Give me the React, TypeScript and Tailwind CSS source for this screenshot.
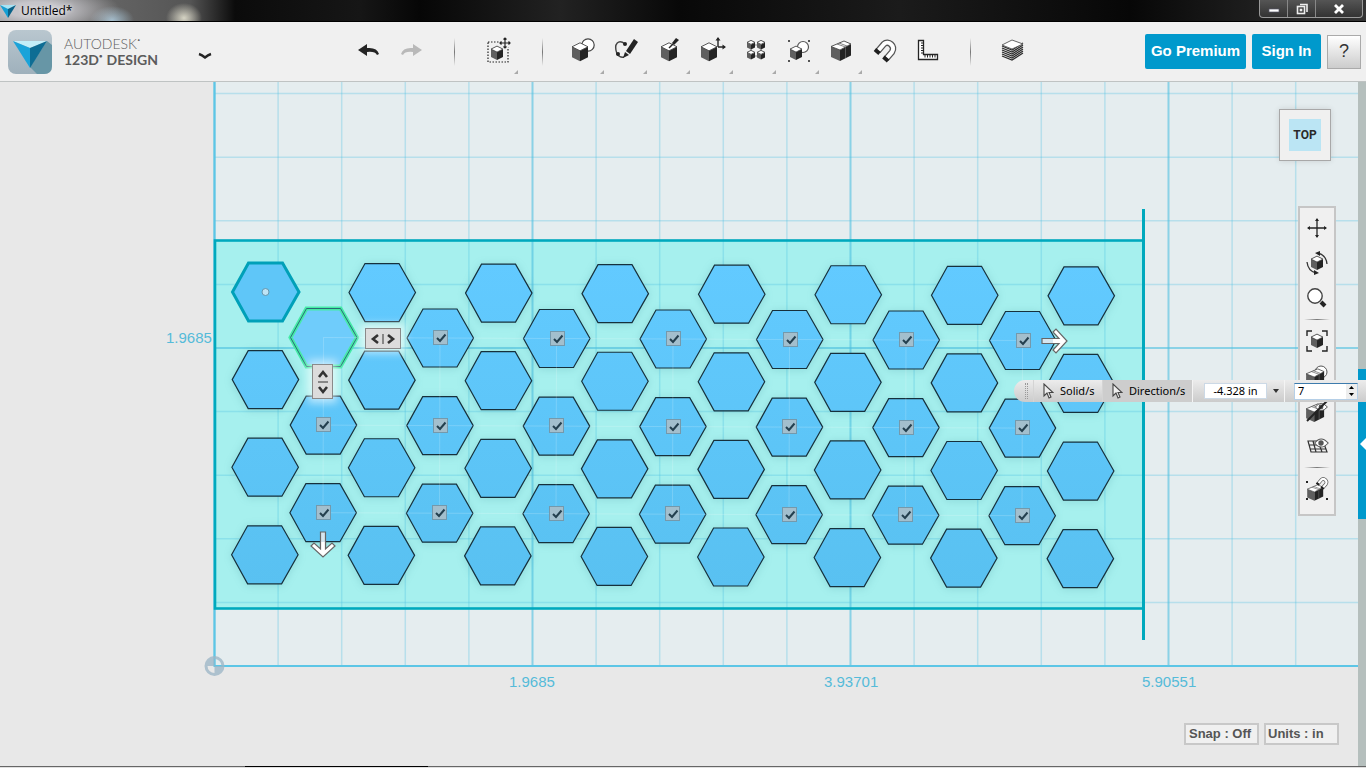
import { useState } from "react"
import type { ReactNode } from "react"

const COL_GAP = 116.5
const ROW_GAP = 87.6

function Cube({ x = 0, y = 0, w = 8 }: { x?: number; y?: number; w?: number }) {
  const h = w * 0.5
  const t = w * 1.15
  return (
    <g transform={`translate(${x} ${y})`} strokeLinejoin="round">
      <path d={`M${-w} ${h - t} L0 ${2 * h - t} V${t} L${-w} ${t - h}Z`} fill="#5f5f5f" />
      <path d={`M${w} ${h - t} L0 ${2 * h - t} V${t} L${w} ${t - h}Z`} fill="#242424" />
      <path d={`M0 ${-t} L${w} ${h - t} L0 ${2 * h - t} L${-w} ${h - t}Z`} fill="#fff" stroke="#444" strokeWidth="0.9" />
    </g>
  )
}

function Slab() {
  return (
    <g strokeLinejoin="round">
      <path d="M-11 -3.500 L-2 0 V11 L-11 7Z" fill="#5f5f5f" />
      <path d="M9 -6 L-2 0 V11 L9 5.500Z" fill="#242424" />
      <path d="M3.500 -3 V8" stroke="#666" strokeWidth="0.8" />
      <path d="M-11 -3.500 L2 -9 L9 -6 L-2 0Z" fill="#fff" stroke="#444" strokeWidth="0.9" />
      <path d="M-5 -6 L3.500 -3 M-3 -7 L5 -4" stroke="#666" strokeWidth="0.8" />
    </g>
  )
}

function Magnet() {
  return (
    <g fill="none">
      <path d="M-7 1 L-1 -6 C3 -10 11 -4 7 2 L1 9" stroke="#555" strokeWidth="6.5" />
      <path d="M-7 1 L-1 -6 C3 -10 11 -4 7 2 L1 9" stroke="#fff" strokeWidth="4" />
      <path d="M-9 3 L-6.500 0 M-0.500 10.500 L2 7.500" stroke="#1f1f1f" strokeWidth="6" />
    </g>
  )
}

function Eye() {
  return (
    <g>
      <path d="M-7 0 Q0 -9 8 0 Q0 9 -7 0Z" fill="#fff" stroke="#555" strokeWidth="1.2" />
      <circle r="3" fill="#555" />
    </g>
  )
}

const undoPath = <path d="M-11 0 L-2 -6 V-2 Q8 -3 10 4 L8 5 Q6 1 -2 2 V6Z" />

function ToolButton({ label, menu, wide, children }: { label: string; menu?: boolean; wide?: boolean; children: ReactNode }) {
  return (
    <button type="button" aria-label={label} className={wide ? "w-[47px] shrink-0" : "w-[43px] shrink-0"}>
      <svg viewBox="-21 -28 43 59" className="mx-auto block h-[59px] w-[43px]" fill="#242424">
        {children}
        {menu && <path d="M20 20 V24 H16Z" fill="#aaa" />}
      </svg>
    </button>
  )
}

function ToolDivider() {
  return <span className="mx-5 h-7 w-px shrink-0 bg-linear-to-b from-transparent via-[#777] to-transparent" />
}

function NavButton({ label, children }: { label: string; children: ReactNode }) {
  return (
    <button type="button" aria-label={label} className="flex h-[35px] items-center justify-center">
      <svg viewBox="-12 -12 24 24" className="size-6" fill="#242424">{children}</svg>
    </button>
  )
}

function NavDivider() {
  return (
    <div className="flex h-2 items-center px-1">
      <span className="h-px flex-1 bg-linear-to-r from-transparent via-[#777] to-transparent" />
    </div>
  )
}

function TitleBar() {
  return (
    <div className="flex h-[22px] items-start justify-between overflow-hidden border-b border-black bg-[#0b0b0b] bg-[radial-gradient(ellipse_85px_26px_at_35px_10px,#c6c5ca_30%,transparent),radial-gradient(ellipse_22px_14px_at_112px_20px,#a3bccb,transparent),radial-gradient(ellipse_18px_15px_at_184px_18px,#d6d4c4,transparent),linear-gradient(90deg,#777_0,#555_190px,#0b0b0b_235px,#161616_360px,#060606_420px,#222_560px,#080808_680px,#1b1b1b_900px,#070707_1130px,#333_100%)]">
      <div className="flex h-[21px] items-center gap-[5px]">
        <svg viewBox="0 0 16 16" className="size-4">
          <path d="M0 2 H16 L8 6Z" fill="#a8e4f5" />
          <path d="M0 2 L8 6 V15Z" fill="#159fd4" />
          <path d="M16 2 L8 6 V15Z" fill="#0a6288" />
        </svg>
        <span className="font-['Open_Sans',sans-serif] text-[12px] leading-4 text-black [text-shadow:0_0_4px_#fff]">Untitled*</span>
      </div>
      <div className="mr-[3px] flex h-[18px] divide-x divide-[#888] rounded-b border border-t-0 border-[#999] bg-linear-to-b from-[#555] to-[#333]">
        <button type="button" aria-label="Minimize" className="flex w-7 items-center justify-center">
          <svg viewBox="0 0 12 12" className="size-3"><rect x="1" y="6" width="10" height="3" fill="#fff" stroke="#556" strokeWidth="0.7" /></svg>
        </button>
        <button type="button" aria-label="Restore" className="flex w-7 items-center justify-center">
          <svg viewBox="0 0 12 12" className="size-3" fill="none" stroke="#eee" strokeWidth="1.6"><path d="M4 1.500 H11 V9" /><rect x="1.500" y="3.500" width="7" height="7" /><rect x="4.500" y="6.500" width="1" height="1" /></svg>
        </button>
        <button type="button" aria-label="Close" className="flex w-[46px] items-center justify-center">
          <svg viewBox="0 0 12 12" className="size-3" stroke="#fff" strokeWidth="2.800"><path d="M2 2 L10 10 M10 2 L2 10" /></svg>
        </button>
      </div>
    </div>
  )
}

function Toolbar() {
  return (
    <header className="flex h-[60px] items-center border-b border-[#bfc3c3] bg-[#f0f0f0]">
      <svg viewBox="0 0 44 44" className="ml-2 size-11 shrink-0">
        <defs>
          <linearGradient id="badge" x1="0" y1="0" x2="0" y2="1">
            <stop offset="0" stopColor="#b9c7cf" />
            <stop offset="1" stopColor="#9fb1bc" />
          </linearGradient>
        </defs>
        <rect width="44" height="44" rx="8" fill="url(#badge)" />
        <path d="M39 11 L44 15 V36 Q44 44 36 44 H29 L22 37Z" fill="#6796a6" />
        <path d="M5 11 H39 L22 18Z" fill="#c4eef8" />
        <path d="M5 11 L22 18 V38Z" fill="#1aa3d9" />
        <path d="M39 11 L22 18 V38Z" fill="#0d6d94" />
      </svg>
      <h1 className="ml-3 w-[120px] shrink-0 font-['Lato',sans-serif] text-[14px] leading-4 whitespace-nowrap text-[#5c5c5c]">
        <span className="flex font-light">AUTODESK<span className="text-[6px] leading-2">•</span></span>
        <span className="flex font-bold">123D<span className="mr-1 text-[6px] leading-2">•</span>DESIGN</span>
      </h1>
      <button type="button" aria-label="Application menu" className="ml-2 flex h-8 w-[26px] items-center justify-center pt-2">
        <svg viewBox="0 0 14 8" className="h-2 w-[14px]" fill="none" stroke="#242424" strokeWidth="2.400"><path d="M1 2 Q4 3 7 5.500 Q10 3 13 2" /></svg>
      </button>
      <nav aria-label="Tools" className="ml-[130px] flex items-center">
        <ToolButton label="Undo">{undoPath}</ToolButton>
        <ToolButton label="Redo"><g transform="translate(-1 0) scale(-1 1)" fill="#b9b9b9">{undoPath}</g></ToolButton>
        <ToolDivider />
        <ToolButton label="Transform" menu wide>
          <rect x="-10" y="-8" width="20" height="20" fill="none" stroke="#242424" strokeWidth="1.200" strokeDasharray="1.500 1.500" />
          <Cube x={-1} y={3} w={6} />
          <circle cx="7" cy="-7" r="5.500" fill="#f0f0f0" />
          <path d="M7 -12 V-2 M2 -7 H12 M5.500 -10.500 L7 -12 L8.500 -10.500 M5.500 -3.500 L7 -2 L8.500 -3.500 M3.500 -8.500 L2 -7 L3.500 -5.500 M10.500 -8.500 L12 -7 L10.500 -5.500" fill="none" stroke="#242424" strokeWidth="1.200" />
        </ToolButton>
        <ToolDivider />
        <ToolButton label="Primitives" menu>
          <circle cx="4" cy="-5" r="6.200" fill="#fff" stroke="#444" strokeWidth="1.200" />
          <Cube x={-4} y={2} />
        </ToolButton>
        <ToolButton label="Sketch" menu>
          <path d="M-2 -6 C-8 -11 -14 -7 -10 4 Q-7 8 -3 7" fill="none" stroke="#444" strokeWidth="1.400" />
          <circle cx="-2" cy="-6" r="2" />
          <circle cx="-9" cy="4" r="2" />
          <path d="M7 -11 L11 -8 L3 4 L-1 1Z" />
          <path d="M-2 2 L2 5 L-4 8Z" />
        </ToolButton>
        <ToolButton label="Construct" menu>
          <Cube x={-1} y={2} />
          <path d="M6 -12 L9 -10 L4 -5 L2 -7Z" />
          <path d="M3 -6 L-1 -2" stroke="#242424" strokeWidth="1.500" />
        </ToolButton>
        <ToolButton label="Modify" menu>
          <Cube x={-4} y={2} />
          <path d="M5 -3 V-12 M5 -3 H12" stroke="#242424" strokeWidth="1.400" />
          <path d="M5 -13 L7.500 -9.500 H2.500Z M13 -3 L9.500 -5.500 V-0.500Z" />
        </ToolButton>
        <ToolButton label="Pattern" menu>
          <path d="M-5 -5 H5 V6 H-5Z" fill="none" stroke="#888" />
          <Cube x={-5} y={-5} w={4} />
          <Cube x={5} y={-5} w={4} />
          <Cube x={-5} y={5} w={4} />
          <Cube x={5} y={5} w={4} />
        </ToolButton>
        <ToolButton label="Grouping" menu>
          <path d="M-11 -10 h2 v2 h-2z M9 -10 h2 v2 h-2z M-11 10 h2 v2 h-2z M9 10 h2 v2 h-2z" fill="#555" />
          <circle cx="4" cy="-3" r="5.500" fill="#fff" stroke="#555" strokeWidth="1.200" />
          <Cube x={-3} y={3} w={6} />
        </ToolButton>
        <ToolButton label="Combine" menu><Slab /></ToolButton>
        <ToolButton label="Snap"><Magnet /></ToolButton>
        <ToolButton label="Measure">
          <path d="M-9.500 -9.500 H-4.500 V4.500 H9.500 V9.500 H-9.500Z" fill="#fff" stroke="#242424" strokeWidth="1.300" />
          <path d="M-7 -7 h2 M-7 -4.500 h2 M-7 -2 h2 M-7 0.500 h2 M-7 3 h2 M-3 5 v2.500 M-0.500 5 v2.500 M2 5 v2.500 M4.500 5 v2.500 M7 5 v2.500" stroke="#242424" />
        </ToolButton>
        <ToolDivider />
        <ToolButton label="Material">
          <path d="M-10 -5 L0 -1 L11 -5 V6 L0 11 L-10 6Z" fill="#eee" />
          {[-3, -1, 1, 3, 5, 7].map((y) => (
            <path key={y} d={`M-10 ${y - 1} L0 ${y + 3} L11 ${y - 4}`} fill="none" stroke="#2b2b2b" strokeWidth="1.200" />
          ))}
          <path d="M0 -10 L11 -6 L0 -1 L-10 -5Z" fill="#fff" stroke="#555" strokeWidth="0.9" />
        </ToolButton>
      </nav>
      <div className="mr-[5px] ml-auto flex shrink-0 items-center gap-[6px] font-['Liberation_Sans',sans-serif] text-[15px] font-bold whitespace-nowrap text-white">
        <button type="button" className="h-[35px] w-[101px] rounded-xs bg-[#09c]">Go Premium</button>
        <button type="button" className="h-[35px] w-[69px] rounded-xs bg-[#09c]">Sign In</button>
        <button type="button" className="h-[34px] w-[34px] border border-[#aaa] bg-linear-to-b from-white to-[#ccc] text-[18px] font-normal text-[#333]">?</button>
      </div>
    </header>
  )
}

const gridColumns = Array.from({ length: 18 }, (_, i) => i)
const gridRows = Array.from({ length: 10 }, (_, i) => i)

const holes = Array.from({ length: 32 }, (_, i) => {
  const col = i % 8
  const row = Math.floor(i / 8)
  return { x: 265.5 + col * COL_GAP - row * 0.3, y: 210 + row * ROW_GAP + col * 0.55 }
})

const copies = Array.from({ length: 21 }, (_, i) => {
  const col = i % 7
  const row = Math.floor(i / 7)
  return { x: 323.5 + col * COL_GAP - row * 0.3, y: 255.5 + row * ROW_GAP + col * 0.5 }
})

function hexagon(x: number, y: number) {
  return `M${x - 33} ${y} L${x - 17} ${y - 29} H${x + 17} L${x + 33.5} ${y} L${x + 17} ${y + 29} H${x - 17}Z`
}

function Drawing() {
  return (
    <svg className="absolute inset-0 h-full w-full font-['Liberation_Sans',sans-serif] text-[15px]">
      <defs>
        <linearGradient id="solid" gradientUnits="userSpaceOnUse" x1="0" y1="180" x2="0" y2="504">
          <stop offset="0" stopColor="#62caff" />
          <stop offset="1" stopColor="#59c1f1" />
        </linearGradient>
      </defs>
      <rect x="214" y="0" width="100%" height="584" fill="#e5edef" />
      <rect x="215" y="158" width="928" height="368" fill="#a6f0ee" />
      {gridColumns.map((i) => {
        const x = 214.5 + i * 63.6
        return <line key={i} x1={x} x2={x} y1="0" y2="584" stroke="#4dbfe0" strokeOpacity={i % 5 === 0 ? 0.6 : 0.3} strokeWidth={i % 5 === 0 ? 2 : 1.5} />
      })}
      {gridRows.map((i) => {
        const y = 584 - i * 63.6
        return <line key={i} x1="214" x2="100%" y1={y} y2={y} stroke="#4dbfe0" strokeOpacity={i % 5 === 0 ? 0.6 : 0.3} strokeWidth={i % 5 === 0 ? 2 : 1.5} />
      })}
      <path d="M214.500 0 V584 H3000" fill="none" stroke="#5cc6e6" strokeWidth="2" />
      <rect x="215" y="158.500" width="928.500" height="368" fill="none" stroke="#00a9bd" strokeWidth="2.600" />
      <path d="M1143.500 127 V558" stroke="#00a9bd" strokeWidth="3" />
      <g className="drop-shadow-[0_1px_4px_rgba(0,90,110,0.15)]" fill="url(#solid)" stroke="#16303c" strokeWidth="1.200">
        {holes.slice(1).map((p, i) => <path key={i} d={hexagon(p.x, p.y)} />)}
        {copies.slice(1).map((p, i) => <path key={i} d={hexagon(p.x, p.y)} />)}
      </g>
      <path d={hexagon(holes[0].x, holes[0].y)} fill="#5fc6f8" stroke="#00a0b8" strokeWidth="3" />
      <circle cx="265.500" cy="210" r="3.500" fill="#bfe4f5" stroke="#6596ad" />
      <path d={hexagon(copies[0].x, copies[0].y)} fill="#6fccfb" stroke="#45eba6" strokeWidth="4" />
      <path d={hexagon(copies[0].x, copies[0].y)} fill="none" stroke="#2b6a78" />
      <g stroke="#fff" strokeOpacity="0.18">
        {[0, 1, 2].map((r) => <line key={r} x1="323" y1={255.5 + r * ROW_GAP} x2="1022" y2={258.5 + r * ROW_GAP} />)}
        {[0, 1, 2, 3, 4, 5, 6].map((c) => <line key={c} x1={323.5 + c * COL_GAP} y1="256" x2={323 + c * COL_GAP} y2="431" />)}
      </g>
      <g fill="#55bbd9">
        <text x="166" y="261">1.9685</text>
        <text x="509" y="605">1.9685</text>
        <text x="824" y="605">3.93701</text>
        <text x="1142" y="605">5.90551</text>
      </g>
      <g transform="translate(214.500 584)" fill="#9db6c7" fillOpacity="0.8">
        <path fillRule="evenodd" d="M-10 0 A10 10 0 1 1 10 0 A10 10 0 1 1 -10 0Z M0 -7 V0 H7 A7 7 0 0 0 0 -7Z M-7 0 H0 V7 A7 7 0 0 1 -7 0Z" />
      </g>
    </svg>
  )
}

function CopyToggle({ x, y, index }: { x: number; y: number; index: number }) {
  return (
    <label className="absolute -mt-[8px] -ml-[7px] grid size-[15px] place-items-center" style={{ left: Math.round(x), top: Math.round(y) }}>
      <input type="checkbox" defaultChecked aria-label={`Copy ${index}`} className="peer col-start-1 row-start-1 size-[15px] appearance-none border border-[#7499ac] bg-[#a3bfcd]" />
      <svg viewBox="0 0 12 12" className="pointer-events-none invisible col-start-1 row-start-1 size-3 peer-checked:visible" fill="none" stroke="#24404f" strokeWidth="2">
        <path d="M2 6 L5 9 L10.500 2.500" />
      </svg>
    </label>
  )
}

function Handles() {
  return (
    <>
      <button type="button" aria-label="Horizontal spacing" className="absolute top-[246px] left-[365px] flex h-[21px] w-9 items-center justify-center border border-[#8a8a8a] bg-[#dcdcdc] shadow-[0_0_8px_4px_rgba(255,255,255,0.6)]">
        <svg viewBox="0 0 26 12" className="h-3 w-[26px]" fill="none" stroke="#333" strokeWidth="2.600"><path d="M8 2 L3 6 L8 10 M18 2 L23 6 L18 10" /><path d="M13 1 V11" strokeWidth="1" /></svg>
      </button>
      <button type="button" aria-label="Vertical spacing" className="absolute top-[282px] left-[312px] flex h-[35px] w-[21px] items-center justify-center border border-[#8a8a8a] bg-[#dcdcdc] shadow-[0_0_8px_4px_rgba(255,255,255,0.6)]">
        <svg viewBox="0 0 12 26" className="h-[26px] w-3" fill="none" stroke="#333" strokeWidth="2.600"><path d="M2 8 L6 3 L10 8 M2 18 L6 23 L10 18" /><path d="M1 13 H11" strokeWidth="1" /></svg>
      </button>
      <button type="button" aria-label="Drag rows" className="absolute top-[448px] left-[310px] h-7 w-[26px]">
        <svg viewBox="0 0 26 28" className="h-7 w-[26px]" fill="#fff" stroke="#666" strokeWidth="1.200">
          <path fill="#d5e6f0" d="M10.500 2 H15.500 V19 H10.500Z" />
          <path d="M10.500 12 V19 L4 13 L1 16 L13 27 L25 16 L22 13 L15.500 19 V12" />
        </svg>
      </button>
      <button type="button" aria-label="Drag columns" className="absolute top-[246px] left-[1041px] h-[26px] w-7">
        <svg viewBox="0 0 28 26" className="h-[26px] w-7" fill="#fff" stroke="#666" strokeWidth="1.200">
          <path fill="#d5e6f0" d="M1 10.500 V15.500 H18 V10.500Z" />
          <path d="M12 10.500 H18 L12 4 L15 1 L26 13 L15 25 L12 22 L18 15.500 H12" />
        </svg>
      </button>
    </>
  )
}

function NavBar() {
  return (
    <nav aria-label="View" className="absolute top-[124px] right-[30px] flex w-[38px] flex-col border-2 border-[#c6c6c6] bg-[#f0f0f0] pt-[2px] pb-2">
      <NavButton label="Pan">
        <path d="M0 -9 V9 M-9 0 H9" stroke="#242424" strokeWidth="1.300" />
        <path d="M0 -10 L2 -7 H-2Z M0 10 L2 7 H-2Z M-10 0 L-7 -2 V2Z M10 0 L7 -2 V2Z" />
      </NavButton>
      <NavButton label="Orbit">
        <Cube w={6} />
        <path d="M1 -10 Q9 -8 10 1 M-10 -1 Q-9 8 -1 10" fill="none" stroke="#333" strokeWidth="1.300" />
        <path d="M-2 -10 L3 -12 V-7Z M2 10 L-3 12 V7Z" />
      </NavButton>
      <NavButton label="Zoom">
        <circle cx="-2" cy="-2" r="7.200" fill="#fff" stroke="#444" strokeWidth="1.400" />
        <path d="M4 4 L8 8" stroke="#242424" strokeWidth="4" />
      </NavButton>
      <NavDivider />
      <NavButton label="Fit">
        <Cube w={6} />
        <path d="M-10 -5 V-10 H-5 M5 -10 H10 V-5 M10 5 V10 H5 M-5 10 H-10 V5" fill="none" stroke="#242424" strokeWidth="1.400" />
      </NavButton>
      <NavButton label="Materials and outlines">
        <circle cx="4" cy="-4" r="6" fill="#fff" stroke="#555" />
        <g transform="translate(-1 1) scale(0.9)"><Slab /></g>
      </NavButton>
      <NavButton label="Hide solids">
        <g transform="translate(-1 1) scale(0.9)"><Slab /></g>
        <g transform="translate(4 -4) scale(0.8)"><Eye /></g>
        <path d="M10 -10 L-10 10" stroke="#242424" strokeWidth="2" />
      </NavButton>
      <NavButton label="Grid visibility">
        <path d="M-9 -5 H6 L10 6 H-6Z M-8 -1 H9 M-7 3 H9 M-4 -5 L-1 6 M1 -5 L5 6" fill="none" stroke="#333" strokeWidth="1.200" />
        <g transform="translate(4 -3) scale(0.9)"><Eye /></g>
      </NavButton>
      <NavDivider />
      <NavButton label="Snapping">
        <path d="M-11 -8 h2 v2 h-2z M-11 9 h2 v2 h-2z M9 9 h2 v2 h-2z" />
        <g transform="translate(-1 3) scale(0.8)"><Slab /></g>
        <g transform="translate(5 -6) scale(0.55)"><Magnet /></g>
      </NavButton>
    </nav>
  )
}

const cursorIcon = (
  <svg viewBox="0 0 12 16" className="h-4 w-3" fill="#eee" stroke="#444" strokeWidth="1.100">
    <path d="M2 1 V13 L5 10 L7 15 L9 14 L7 9.500 H11Z" />
  </svg>
)

function PatternBar() {
  const [count, setCount] = useState("7")
  const step = (by: number) => setCount(String(Number(count) + by))

  return (
    <div className="absolute top-[298px] right-0 flex h-[22px] w-[352px] items-stretch rounded-l-full rounded-r-md bg-linear-to-b from-[#ececec] to-[#cbcbcb] font-['Noto_Sans',sans-serif] text-[11px] text-black">
      <span className="my-[3px] mr-[5px] ml-[11px] w-[3px] border-x border-dotted border-[#999]" />
      <button type="button" className="flex w-[70px] items-center gap-[6px] border-x border-[#d4d4d4] pl-2">{cursorIcon}Solid/s</button>
      <button type="button" className="flex w-[90px] items-center gap-[6px] border-r border-[#f4f4f4] bg-[#cdcdcd] pl-2">{cursorIcon}Direction/s</button>
      <div className="flex w-[92px] items-center border-r border-[#f4f4f4] pl-[11px]">
        <input aria-label="Distance" defaultValue="-4.328 in" className="h-4 w-[63px] border border-[#ccd9e6] bg-white text-center" />
        <button type="button" aria-label="Distance options" className="flex flex-1 justify-center">
          <svg viewBox="0 0 6 4" className="h-1 w-[6px]"><path d="M0 0 H6 L3 4Z" fill="#333" /></svg>
        </button>
      </div>
      <div className="flex items-center pl-[9px]">
        <div className="flex h-[17px] w-[64px] border border-[#b5cfe7] border-t-[#3d7bad] bg-white">
          <input aria-label="Copies" value={count} onChange={(e) => setCount(e.target.value)} className="w-[51px] pl-[3px] outline-none" />
          <div className="flex flex-1 flex-col bg-[#eee]">
            <button type="button" aria-label="More copies" onClick={() => step(1)} className="flex flex-1 items-center justify-center">
              <svg viewBox="0 0 5 3" className="h-[3px] w-[5px]"><path d="M0 3 H5 L2.500 0Z" /></svg>
            </button>
            <button type="button" aria-label="Fewer copies" onClick={() => step(-1)} className="flex flex-1 items-center justify-center">
              <svg viewBox="0 0 5 3" className="h-[3px] w-[5px]"><path d="M0 0 H5 L2.500 3Z" /></svg>
            </button>
          </div>
        </div>
      </div>
    </div>
  )
}

export default function App() {
  return (
    <div className="flex min-h-screen flex-col bg-[#e8e8e8]">
      <TitleBar />
      <Toolbar />
      <main className="relative flex-1 overflow-hidden">
        <Drawing />
        {copies.map((p, i) => i > 0 && <CopyToggle key={i} x={p.x} y={p.y} index={i} />)}
        <Handles />
        <button type="button" className="absolute top-[27px] right-[35px] grid size-[52px] place-items-center border border-[#a8a8a8] bg-[#f0f0f0] shadow-[0_0_6px_rgba(0,0,0,0.12)]">
          <span className="grid size-8 place-items-center bg-[#bbe5f4] font-['Roboto',sans-serif] text-[12px] font-bold text-[#2a2a2a]">TOP</span>
        </button>
        <NavBar />
        <div className="absolute inset-y-0 right-0 w-2 bg-[#b5bfbd] pt-[287px]">
          <button type="button" aria-label="Open parts bin" className="flex h-[150px] w-2 items-center justify-end bg-[#09c]">
            <svg viewBox="0 0 6 12" className="h-3 w-[6px]"><path d="M6 0 V12 L0 6Z" fill="#fff" /></svg>
          </button>
        </div>
        <PatternBar />
        <div className="absolute right-[27px] bottom-[21px] flex gap-[5px] font-['Liberation_Sans',sans-serif] text-[13px] leading-4 font-bold text-[#555]">
          <button type="button" className="h-[22px] w-[75px] border-2 border-[#c8c8c8] bg-[#f0f0f0] pl-[3px] text-left">Snap : Off</button>
          <button type="button" className="h-[22px] w-[75px] border-2 border-[#c8c8c8] bg-[#f0f0f0] pl-[2px] text-left">Units : in</button>
        </div>
      </main>
      <footer className="flex h-[2px] border-t border-[#666] bg-[#e0e0e0] pl-[245px]">
        <span className="-mt-px h-px w-[183px] bg-black" />
      </footer>
    </div>
  )
}
